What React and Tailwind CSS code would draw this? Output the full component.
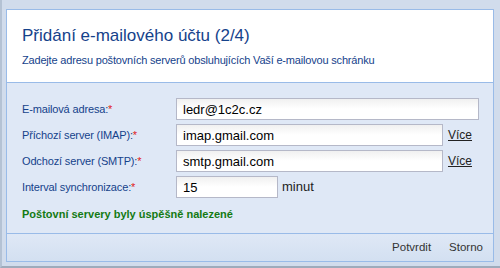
import React from "react";

const labelCls = "text-[11px] text-[#15428b] leading-[22px] whitespace-nowrap tracking-[-0.15px]";
const inputCls =
  "h-[22px] border border-[#b5b8c8] bg-white bg-gradient-to-b from-[#f0f0f0] via-white to-white px-[6px] text-[13px] text-black leading-[20px] font-['Liberation_Sans',Arial,sans-serif] outline-none";

function Label({ children }) {
  return (
    <div className={labelCls}>
      {children}
      <span className="text-[#e02020]">*</span>
    </div>
  );
}

export default function App() {
  return (
    <div className="w-[500px] h-[268px] bg-[#d1dcec] border-l-2 border-b-2 border-l-[#b4c2d4] border-b-[#9eabbb] pt-[9px] pl-[4px] pr-[6px] pb-[4px] font-['Liberation_Sans',Arial,sans-serif]">
      <div className="h-full border border-[#99bbe8] flex flex-col">
        <div className="h-[73px] bg-white border-b border-[#99bbe8] pl-[15px] pt-[15px]">
          <div className="text-[17px] leading-[22px] text-[#15428b]">Přidání e-mailového účtu (2/4)</div>
          <div className="text-[11px] leading-[14px] text-[#15428b] mt-[6px] tracking-[-0.18px]">
            Zadejte adresu poštovních serverů obsluhujících Vaší e-mailovou schránku
          </div>
        </div>
        <div className="h-[151px] bg-[#dfe8f6] border-b border-[#99bbe8] pl-[15px] pt-[15px]">
          <div className="grid grid-cols-[154px_1fr] gap-y-[4px] items-center">
            <Label>E-mailová adresa:</Label>
            <input className={inputCls + " w-[303px]"} defaultValue="ledr@1c2c.cz" />
            <Label>Příchozí server (IMAP):</Label>
            <div className="flex items-center">
              <input className={inputCls + " w-[267px]"} defaultValue="imap.gmail.com" />
              <a className="ml-[5px] text-[12px] text-[#222] underline">Více</a>
            </div>
            <Label>Odchozí server (SMTP):</Label>
            <div className="flex items-center">
              <input className={inputCls + " w-[267px]"} defaultValue="smtp.gmail.com" />
              <a className="ml-[5px] text-[12px] text-[#222] underline">Více</a>
            </div>
            <Label>Interval synchronizace:</Label>
            <div className="flex items-center">
              <input className={inputCls + " w-[102px]"} defaultValue="15" />
              <span className="ml-[4px] text-[13px] text-[#222]">minut</span>
            </div>
          </div>
          <div className="mt-[9px] text-[11px] leading-[14px] font-bold text-[#137a13]">
            Poštovní servery byly úspěšně nalezené
          </div>
        </div>
        <div className="flex-1 bg-gradient-to-b from-[#dfe8f6] to-[#d3e0f1] flex items-center justify-end pr-[10px] gap-[18px] text-[11.5px] text-[#333]">
          <span>Potvrdit</span>
          <span>Storno</span>
        </div>
      </div>
    </div>
  );
}
